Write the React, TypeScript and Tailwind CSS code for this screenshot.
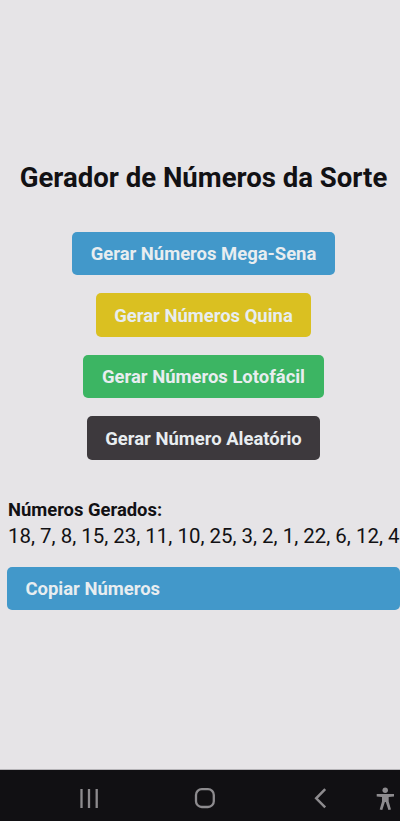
const generators = [
  { label: "Gerar Números Mega-Sena", color: "bg-[#4298ca]" },
  { label: "Gerar Números Quina", color: "bg-[#dac021]" },
  { label: "Gerar Números Lotofácil", color: "bg-[#3cb563]" },
  { label: "Gerar Número Aleatório", color: "bg-[#3d393d]" },
];

const numbers = [18, 7, 8, 15, 23, 11, 10, 25, 3, 2, 1, 22, 6, 12, 4];

export default function App() {
  return (
    <div className="h-screen flex flex-col overflow-hidden bg-[#e6e4e7] text-[#121114] font-['Roboto',sans-serif]">
      {/* Main Content */}
      <main className="flex-1 min-h-0 pl-[7px] pt-[159px]">
        <h1 className="text-[27.55px] leading-[38px] font-bold text-center whitespace-nowrap">
          Gerador de Números da Sorte
        </h1>

        {/* Generator Buttons */}
        <div className="mt-[34.7px] flex flex-col items-center gap-[18.2px]">
          {generators.map((item) => (
            <button
              key={item.label}
              className={`${item.color} h-[43.4px] px-[18.6px] pt-[3px] rounded-[5px] text-[18.45px] font-bold whitespace-nowrap text-[#e8edf0]`}
            >
              {item.label}
            </button>
          ))}
        </div>

        {/* Result */}
        <div className="mt-[36.5px]">
          <h2 className="pl-px text-[18.4px] leading-[27px] font-bold">Números Gerados:</h2>
          <p className="pl-px text-[20.45px] leading-[27px] whitespace-nowrap">{numbers.join(", ")}</p>
          <button className="mt-[16.5px] w-full h-[43.4px] px-[18.5px] pt-[3px] rounded-[5px] text-left text-[18.45px] font-bold bg-[#4298ca] text-[#e8edf0]">
            Copiar Números
          </button>
        </div>
      </main>

      {/* Android Navigation Bar */}
      <nav className="h-[52px] shrink-0 bg-[#111013] border-t border-[#b5b3b7] text-[#8d8b8e]">
        <svg width="400" height="51" viewBox="0 0 400 51" fill="none" stroke="currentColor" strokeWidth="2.3">
          <path d="M81.500 19v19M89 19v19M96.700 19v19" />
          <rect x="196" y="19.200" width="17.800" height="17.800" rx="5.800" />
          <path d="M325.200 19.200l-9 9.100 9 9.100" strokeWidth="2.500" />
          <g fill="currentColor" stroke="none">
            <circle cx="385.200" cy="20.300" r="2.700" />
            <path d="M376.700 24h17.300v2.400l-5.300.5v4.500l2.300 8-2.600.7-2.600-8h-.900l-2.600 8-2.600-.7 2.300-8v-4.500l-5.300-.5z" />
          </g>
        </svg>
      </nav>
    </div>
  );
}
